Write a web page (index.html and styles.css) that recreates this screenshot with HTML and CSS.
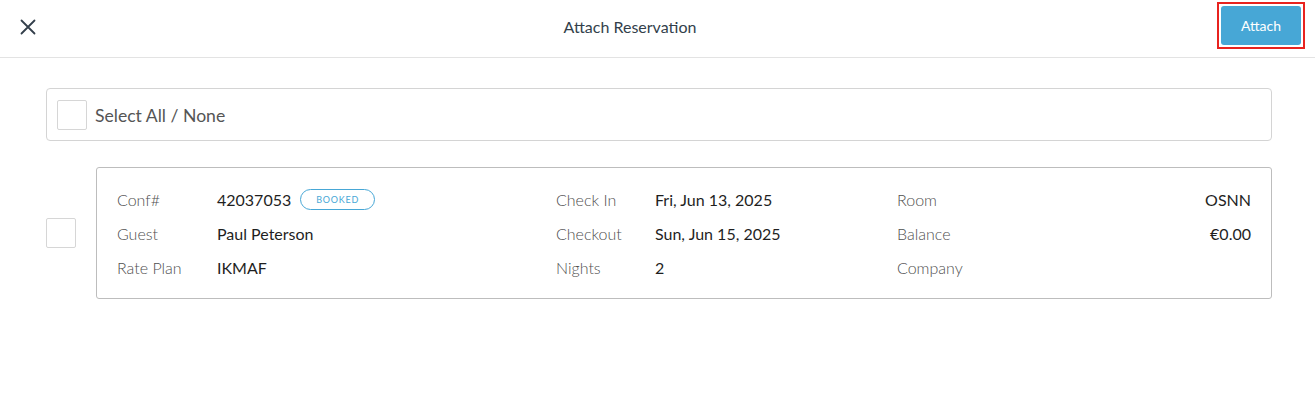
FILE: index.html
```html
<!DOCTYPE html>
<html>
<head>
<meta charset="utf-8">
<link rel="stylesheet" href="styles.css">
</head>
<body>
<header class="topbar">
  <button class="close" aria-label="Close">
    <svg width="16" height="16" viewBox="0 0 16 16"><path d="M1.5 1.5 L14.5 14.5 M14.5 1.5 L1.5 14.5" stroke="#333f4b" stroke-width="1.8" stroke-linecap="round" fill="none"/></svg>
  </button>
  <div class="title">Attach Reservation</div>
  <div class="attach-wrap"><button class="attach">Attach</button></div>
</header>
<main class="content">
  <div class="select-all">
    <span class="check"></span>
    <span class="select-label">Select All / None</span>
  </div>
  <div class="res-row">
    <span class="check"></span>
    <div class="card">
      <div class="col c1">
        <div class="row"><span class="lbl">Conf#</span><span class="val">42037053 <span class="badge">BOOKED</span></span></div>
        <div class="row"><span class="lbl">Guest</span><span class="val">Paul Peterson</span></div>
        <div class="row"><span class="lbl">Rate Plan</span><span class="val">IKMAF</span></div>
      </div>
      <div class="col c2">
        <div class="row"><span class="lbl">Check In</span><span class="val">Fri, Jun 13, 2025</span></div>
        <div class="row"><span class="lbl">Checkout</span><span class="val">Sun, Jun 15, 2025</span></div>
        <div class="row"><span class="lbl">Nights</span><span class="val">2</span></div>
      </div>
      <div class="col c3">
        <div class="row"><span class="lbl">Room</span><span class="val right">OSNN</span></div>
        <div class="row"><span class="lbl">Balance</span><span class="val right">€0.00</span></div>
        <div class="row"><span class="lbl">Company</span><span class="val right"></span></div>
      </div>
    </div>
  </div>
</main>
</body>
</html>
```
FILE: styles.css
```css
* { box-sizing: border-box; }
html, body { margin: 0; padding: 0; background: #fff; }
body { font-family: Lato, "Open Sans", sans-serif; color: #222; width: 1315px; height: 393px; overflow: hidden; }

.topbar {
  height: 58px;
  border-bottom: 1px solid #e3e3e3;
  display: flex;
  align-items: center;
  padding: 0 10px 0 20px;
}
.close { border: 0; background: none; padding: 0; width: 16px; height: 16px; cursor: pointer; display: flex; margin-top: -3px; flex: none; }
.title { flex: 1; text-align: center; padding-left: 7px; font-size: 16px; color: #333f4b; font-weight: 400; margin-top: -4px; }
.attach-wrap {
  flex: none;
  border: 2px solid #e8231f;
  padding: 2px;
  margin-top: -6px;
}
.attach {
  display: block;
  width: 80px;
  height: 39px;
  border: 0;
  border-radius: 3px;
  background: #47a7d6;
  color: #fff;
  font-family: Lato, sans-serif;
  font-size: 14px;
}

.content { padding: 30px 43px 0 46px; }

.check {
  display: block;
  width: 30px;
  height: 30px;
  border: 1px solid #d6d6d6;
  border-radius: 2px;
  background: #fff;
  flex: none;
}

.select-all {
  height: 53px;
  border: 1px solid #d4d4d4;
  border-radius: 4px;
  display: flex;
  align-items: center;
  padding-left: 10px;
  gap: 8px;
}
.select-label { font-size: 17.6px; color: #555; font-weight: 400; margin-top: 1px; }

.res-row {
  margin-top: 26px;
  display: flex;
  align-items: center;
  gap: 20px;
}
.card {
  flex: 1;
  border: 1px solid #bdbdbd;
  border-radius: 3px;
  padding: 14px 20px 14px 20px;
  display: grid;
  grid-template-columns: 439px 341px 1fr;
}
.row { display: flex; align-items: center; height: 34px; font-size: 16px; }
.lbl { width: 100px; flex: none; color: #4f4f4f; font-weight: 300; }
.c2 .lbl { width: 99px; }
.val { color: #1f1f1f; font-weight: 400; display: flex; align-items: center; white-space: nowrap; }
.val.right { margin-left: auto; }
.badge {
  display: inline-flex;
  align-items: center;
  justify-content: center;
  margin-left: 9px;
  width: 75px;
  height: 21px;
  border: 1px solid #47a7d6;
  border-radius: 11px;
  color: #47a7d6;
  font-size: 9px;
  letter-spacing: 0.8px;
  font-weight: 400;
}
```
